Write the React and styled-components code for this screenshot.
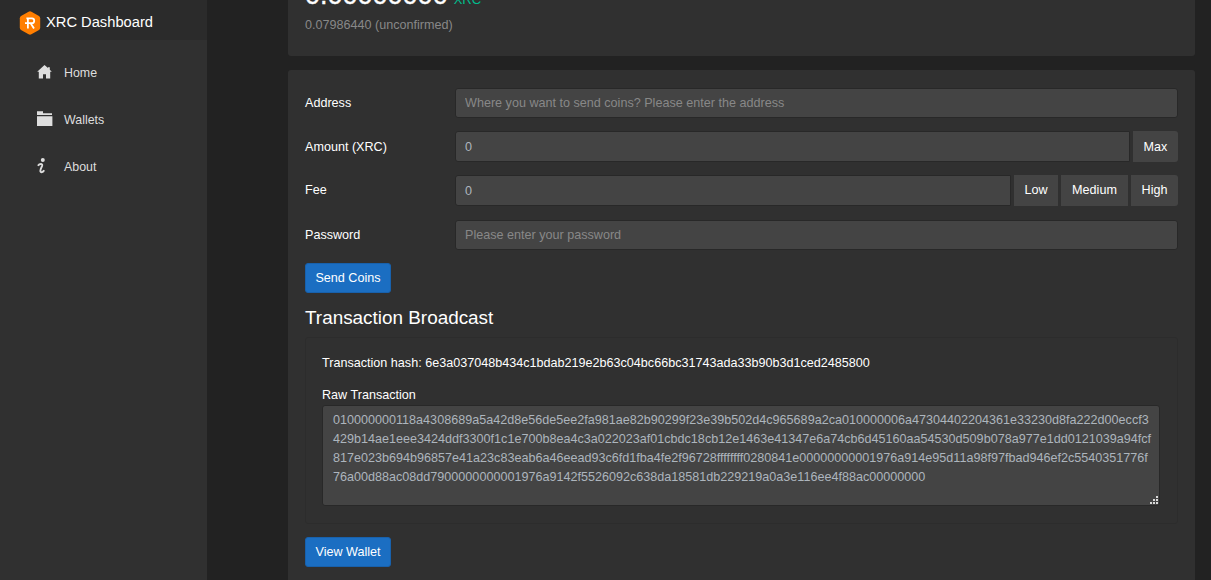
import React from "react";
import styled, { createGlobalStyle } from "styled-components";

const GlobalStyle = createGlobalStyle`
  * { box-sizing: border-box; }
  html, body { margin: 0; height: 100%; overflow: hidden; background: #222222; }
  body, input, button, textarea {
    font-family: "Liberation Sans", Arial, sans-serif;
    font-size: 12.6px;
    line-height: 19px;
    color: #ffffff;
  }
`;

const Page = styled.div`
  display: flex;
  height: 580px;
  overflow: hidden;
`;

const Sidebar = styled.aside`
  width: 207px;
  flex: none;
  background: #303030;
`;

const Brand = styled.div`
  display: flex;
  align-items: center;
  gap: 5px;
  height: 40px;
  padding: 5px 0 0 19px;
  background: #2b2b2b;
  font-size: 14.7px;
`;

const BrandName = styled.span`
  margin-top: -1px;
`;

const Nav = styled.nav`
  display: flex;
  flex-direction: column;
  padding-top: 10px;
`;

const NavItem = styled.a`
  display: flex;
  align-items: center;
  height: 47px;
  padding-left: 37px;
  color: #dedede;
  font-size: 12.4px;
`;

const NavIcon = styled.svg`
  width: 16px;
  height: 16px;
  margin: -3px 11px 0 0;
  fill: #dedede;
`;

const Main = styled.main`
  flex: 1;
  min-width: 0;
  display: flex;
  flex-direction: column;
  gap: 14px;
  padding: 0 16px 0 81px;
`;

const Card = styled.section`
  flex: none;
  padding: 18px 17px 17px;
  background: #303030;
  border-radius: 3px;
`;

const BalanceCard = styled(Card)`
  height: 90px;
  margin-top: -34px;
  padding: 12px 17px 0;
`;

const Balance = styled.div`
  display: flex;
  align-items: baseline;
  gap: 6px;
  height: 38px;
  line-height: 35px;
  font-size: 27px;
  -webkit-text-stroke: 0.4px #ffffff;
`;

const Unit = styled.span`
  font-size: 13px;
  color: #00bc8c;
  -webkit-text-stroke: 0;
`;

const Unconfirmed = styled.div`
  color: #888888;
`;

const SendCard = styled(Card)`
  height: 540px;
`;

const Row = styled.div`
  display: flex;
  align-items: center;
  height: ${(p) => (p.$grouped ? 31 : 30)}px;
  margin-bottom: ${(p) => p.$gap || 13}px;
`;

const Label = styled.label`
  width: 150px;
  flex: none;
  padding-top: ${(p) => (p.$drop ? 1 : 0)}px;
`;

const Group = styled.div`
  display: flex;
  flex: 1;
  gap: 3px;
`;

const Field = styled.input`
  flex: 1;
  min-width: 0;
  height: ${(p) => (p.$joined ? "31px" : "30px")};
  padding: ${(p) => (p.$drop ? 1 : 0)}px 9px 0;
  background: #444444;
  border: 1px solid #282828;
  border-radius: ${(p) => (p.$joined ? "3px 0 0 3px" : "3px")};
  color: #adb5bd;
  outline: none;
  &::placeholder { color: #888888; opacity: 1; }
`;

const AddonButton = styled.button`
  width: ${(p) => p.$width}px;
  height: 31px;
  padding: ${(p) => (p.$drop ? 1 : 0)}px 0 0;
  background: #444444;
  border: 0;
  border-radius: ${(p) => (p.$last ? "0 3px 3px 0" : "0")};
`;

const PrimaryButton = styled.button`
  display: block;
  width: 86px;
  height: 30px;
  padding: 0;
  background: #1b6ec2;
  border: 1px solid #1861ac;
  border-radius: 3px;
`;

const Title = styled.h2`
  margin: 13px 0 8px;
  font-size: 18.9px;
  font-weight: 400;
  line-height: 23px;
`;

const Result = styled.div`
  height: 187px;
  margin-bottom: 13px;
  padding: 16px 17px 17px 16px;
  border: 1px solid #2c2c2c;
  border-radius: 3px;
`;

const Hash = styled.p`
  margin: 0 0 13px;
`;

const RawLabel = styled.label`
  display: block;
  height: 19px;
`;

const RawBox = styled.div`
  position: relative;
  height: 101px;
`;

const Raw = styled.textarea`
  display: block;
  width: 100%;
  height: 100%;
  padding: 5px 0 5px 10px;
  background: #444444;
  border: 1px solid #282828;
  border-radius: 3px;
  color: #adb5bd;
  line-height: 18.9px;
  white-space: pre;
  resize: none;
  outline: none;
  overflow: hidden;
`;

const Grip = styled.svg`
  position: absolute;
  right: 2px;
  bottom: 2px;
  width: 8px;
  height: 8px;
  fill: #d8d8d8;
`;

const RAW_LINES = [
  "010000000118a4308689a5a42d8e56de5ee2fa981ae82b90299f23e39b502d4c965689a2ca010000006a47304402204361e33230d8fa222d00eccf3",
  "429b14ae1eee3424ddf3300f1c1e700b8ea4c3a022023af01cbdc18cb12e1463e41347e6a74cb6d45160aa54530d509b078a977e1dd0121039a94fcf",
  "817e023b694b96857e41a23c83eab6a46eead93c6fd1fba4fe2f96728ffffffff0280841e00000000001976a914e95d11a98f97fbad946ef2c5540351776f",
  "76a00d88ac08dd7900000000001976a9142f5526092c638da18581db229219a0a3e116ee4f88ac00000000",
];

function Logo() {
  return (
    <svg width="22" height="24" viewBox="0 0 22 24">
      <path
        d="M9.6 .7Q11 0 12.4 .7L20 5Q21.2 5.8 21.2 7.2V16.8Q21.2 18.2 20 19L12.4 23.3Q11 24 9.6 23.3L2 19Q.8 18.2 .8 16.8V7.2Q.8 5.8 2 5L9.6 .7Z"
        fill="#ff7e00"
      />
      <path
        d="M7.4 7.3H13Q15.2 7.3 15.2 9.7Q15.2 12.2 13 12.2H6M8.9 7.3V17.5M11.8 12.5L15 17.5"
        fill="none"
        stroke="#fff"
        strokeWidth="1.8"
      />
    </svg>
  );
}

export default function App() {
  return (
    <>
      <GlobalStyle />
      <Page>
        <Sidebar>
          <Brand>
            <Logo />
            <BrandName>XRC Dashboard</BrandName>
          </Brand>
          <Nav>
            <NavItem>
              <NavIcon viewBox="0 0 16 16">
                <path d="M7.5 1L.2 7.8H1.8V14.5H6V10.3H9V14.5H13.2V7.8H14.8L12.8 5.8V3.2H11V4.1Z" />
              </NavIcon>
              Home
            </NavItem>
            <NavItem>
              <NavIcon viewBox="0 0 16 16">
                <path d="M0 .2H6V2.2H15V4H0ZM0 5.2H15.4V15H0Z" />
              </NavIcon>
              Wallets
            </NavItem>
            <NavItem>
              <NavIcon viewBox="0 0 16 16">
                <circle cx="5.8" cy="2.1" r="2" />
                <path
                  d="M.9 7.8Q2.2 6 4 6Q5.8 6.2 5 8.2L3.7 11.2Q2.7 14.3 4.6 14.3Q6.2 14.2 7.2 12.3"
                  fill="none"
                  stroke="#dedede"
                  strokeWidth="1.9"
                />
              </NavIcon>
              About
            </NavItem>
          </Nav>
        </Sidebar>
        <Main>
          <BalanceCard>
            <Balance>
              0.00000000 <Unit>XRC</Unit>
            </Balance>
            <Unconfirmed>0.07986440 (unconfirmed)</Unconfirmed>
          </BalanceCard>
          <SendCard>
            <Row>
              <Label>Address</Label>
              <Field placeholder="Where you want to send coins? Please enter the address" />
            </Row>
            <Row $grouped>
              <Label $drop>Amount (XRC)</Label>
              <Group>
                <Field $joined $drop defaultValue="0" />
                <AddonButton $width={45} $drop $last>Max</AddonButton>
              </Group>
            </Row>
            <Row $grouped $gap={14}>
              <Label>Fee</Label>
              <Group>
                <Field $joined defaultValue="0" />
                <AddonButton $width={44}>Low</AddonButton>
                <AddonButton $width={67}>Medium</AddonButton>
                <AddonButton $width={47} $last>High</AddonButton>
              </Group>
            </Row>
            <Row>
              <Label>Password</Label>
              <Field placeholder="Please enter your password" />
            </Row>
            <PrimaryButton>Send Coins</PrimaryButton>
            <Title>Transaction Broadcast</Title>
            <Result>
              <Hash>Transaction hash: 6e3a037048b434c1bdab219e2b63c04bc66bc31743ada33b90b3d1ced2485800</Hash>
              <RawLabel>Raw Transaction</RawLabel>
              <RawBox>
                <Raw readOnly spellCheck={false} value={RAW_LINES.join("\n")} />
                <Grip viewBox="0 0 8 8">
                  <path d="M6 0h2v2h-2zM3 3h2v2h-2zM6 3h2v2h-2zM0 6h2v2h-2zM3 6h2v2h-2zM6 6h2v2h-2z" />
                </Grip>
              </RawBox>
            </Result>
            <PrimaryButton>View Wallet</PrimaryButton>
          </SendCard>
        </Main>
      </Page>
    </>
  );
}
